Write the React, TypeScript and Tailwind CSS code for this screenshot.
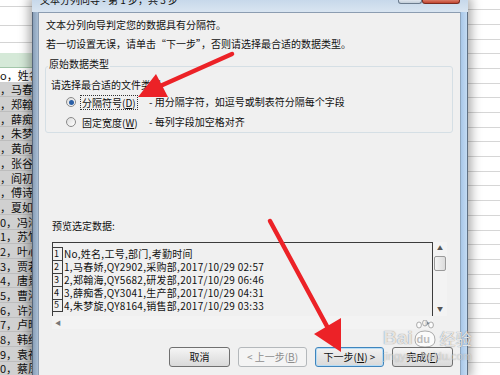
import React from "react";

const cjk = "font-['Noto_Sans_CJK_SC','Noto_Sans',sans-serif]";

function LeftSheet() {
  const rows = [
    "o，姓名，工号",
    "，马春娇",
    "，郑翰海",
    "，薛痴香",
    "，朱梦旋",
    "，黄向晴",
    "，张谷菱",
    "，阎初阳",
    "，傅诗蕾",
    "，夏如柏",
    "0，冯沛凝",
    "1，苏竹",
    "2，叶心",
    "3，贾若",
    "4，唐景",
    "5，曹沁",
    "6，许洁",
    "7，卢晴",
    "8，韩纾",
    "9，袁祯",
    "0，蔡凤",
  ];
  return (
    <div className={`w-[32px] shrink-0 flex flex-col overflow-hidden bg-white ${cjk}`}>
      <div className="h-[6px] shrink-0" />
      <div className="h-[19px] shrink-0 border-t border-[#d4d4d4]" />
      <div className="h-[17px] shrink-0 border-t border-[#d4d4d4]" />
      <div className="h-[11px] shrink-0 border-t border-[#d4d4d4]" />
      <div className="h-[15px] shrink-0 bg-[#d5e9d8] border-b border-[#a3c7aa]" />
      {rows.map((r, i) => (
        <div
          key={i}
          className={`h-[14.7px] shrink-0 whitespace-nowrap text-[11px] leading-[13px] text-[#111] flex items-end border-b ${
            i === 0 ? "bg-white border-[#cfcfcf]" : "bg-[#d0d0d0] border-[#bdbdbd]"
          }`}
        >
          {r}
        </div>
      ))}
    </div>
  );
}

function RightSheet() {
  const rows = Array.from({ length: 25 });
  return (
    <div className="w-[32px] shrink-0 flex flex-col overflow-hidden bg-white">
      <div className="h-[9.2px] shrink-0" />
      {rows.map((_, i) => (
        <div key={i} className="h-[14.7px] shrink-0 border-t border-[#d6d6d6]" />
      ))}
    </div>
  );
}

function Radio({ checked }: { checked: boolean }) {
  return (
    <span className="w-[10px] h-[10px] rounded-full border border-[#8a8a8a] bg-linear-to-br from-[#dcdcdc] to-[#ffffff] flex items-center justify-center shrink-0">
      {checked && <span className="w-[5px] h-[5px] rounded-full bg-[#2a5fa6]" />}
    </span>
  );
}

function Btn({
  w,
  kind,
  children,
}: {
  w: string;
  kind: "normal" | "focus" | "disabled";
  children: React.ReactNode;
}) {
  const base = `${w} h-[20px] rounded-[3px] border flex items-center justify-center text-[10px] leading-[12px] shrink-0`;
  const k =
    kind === "disabled"
      ? "border-[#b4b8bb] bg-[#f4f4f4] text-[#8d8d8d]"
      : kind === "focus"
      ? "border-[#3f85bd] bg-linear-to-b from-[#f2f2f2] to-[#d9d9d9] text-[#111] shadow-[inset_0_0_0_1px_#b7dcf5]"
      : "border-[#707070] bg-linear-to-b from-[#f5f5f5] to-[#d9d9d9] text-[#111]";
  return <div className={`${base} ${k}`}>{children}</div>;
}

function Preview() {
  const lines = [
    "No,姓名,工号,部门,考勤时间",
    "1,马春娇,QY2902,采购部,2017/10/29 02:57",
    "2,郑翰海,QY5682,研发部,2017/10/29 06:46",
    "3,薛痴香,QY3041,生产部,2017/10/29 04:31",
    "4,朱梦旋,QY8164,销售部,2017/10/29 03:33",
  ];
  return (
    <div className="ml-[13px] mt-[9px] w-[395px] flex flex-col">
      <div className="flex h-[74px]">
        <div className="w-[381px] h-[74px] border-t border-l border-r border-[#3c3c3c] bg-[#f0f0f0] pt-[4px] overflow-hidden">
          {lines.map((l, i) => (
            <div key={i} className="flex h-[13px]">
              <div
                className={`w-[10px] shrink-0 border-r border-t border-[#3c3c3c] text-[9px] leading-[12px] pl-[1px] text-[#111] flex items-end ${
                  i === 4 ? "border-b" : ""
                }`}
              >
                {i + 1}
              </div>
              <div className="pl-[1px] text-[10px] leading-[13px] tracking-[0.28px] whitespace-nowrap text-[#111]">{l}</div>
            </div>
          ))}
        </div>
        <div className="w-[14px] h-[74px] bg-[#f3f3f3] flex flex-col items-center">
          <div className="h-[12px] text-[6px] leading-[12px] text-[#555]">▲</div>
          <div className="w-[12px] h-[15px] mt-[2px] rounded-[2px] border border-[#9a9a9a] bg-linear-to-r from-[#f4f4f4] to-[#dcdcdc]" />
          <div className="flex-1" />
          <div className="h-[14px] text-[6px] leading-[14px] text-[#555]">▼</div>
        </div>
      </div>
      <div className="w-[381px] h-[13px] bg-[#f3f3f3] flex items-center justify-between px-[3px] text-[6px] text-[#777]">
        <span>◀</span>
        <span>▶</span>
      </div>
    </div>
  );
}

function Client() {
  return (
    <div className={`flex-1 bg-[#f0f0f0] border-t border-l border-[#8c9db1] flex flex-col text-[#111] ${cjk}`}>
      <div className="ml-[7px] mt-[5px] text-[10px] leading-[14px] whitespace-nowrap">
        文本分列向导判定您的数据具有分隔符。
      </div>
      <div className="ml-[7px] mt-[5px] text-[10px] leading-[14px] whitespace-nowrap">
        若一切设置无误，请单击“下一步”，否则请选择最合适的数据类型。
      </div>
      <div className="ml-[6px] mr-[7px] mt-[15px] h-[67px] border border-[#d5dfe5] rounded-[3px] flex flex-col">
        <div className="-mt-[10px] ml-[2px] px-[1px] w-fit bg-[#f0f0f0] text-[10px] leading-[14px]">原始数据类型</div>
        <div className="ml-[5px] mt-[7px] text-[10px] leading-[14px]">请选择最合适的文件类型:</div>
        <div className="flex items-center h-[20px] mt-[0.5px]">
          <div className="ml-[20px]">
            <Radio checked />
          </div>
          <div className="w-[69px] ml-[4px] flex">
            <span className="border border-dotted border-[#333] px-[1px] text-[10px] leading-[13px]">
              分隔符号(<span className="underline">D</span>)
            </span>
          </div>
          <span className="text-[10px] leading-[14px] whitespace-nowrap">- 用分隔字符，如逗号或制表符分隔每个字段</span>
        </div>
        <div className="flex items-center h-[20px]">
          <div className="ml-[20px]">
            <Radio checked={false} />
          </div>
          <div className="w-[69px] ml-[4px] flex">
            <span className="border border-transparent px-[1px] text-[10px] leading-[13px]">
              固定宽度(<span className="underline">W</span>)
            </span>
          </div>
          <span className="text-[10px] leading-[14px] whitespace-nowrap">- 每列字段加空格对齐</span>
        </div>
      </div>
      <div className="ml-[13px] mt-[86px] text-[10px] leading-[14px]">预览选定数据:</div>
      <Preview />
      <div className="mt-[18px] pr-[7px] flex justify-end gap-[8px]">
        <Btn w="w-[61px]" kind="normal">取消</Btn>
        <Btn w="w-[69px]" kind="disabled">
          &lt; 上一步(<span className="underline">B</span>)
        </Btn>
        <Btn w="w-[69px]" kind="focus">
          下一步(<span className="underline">N</span>) &gt;
        </Btn>
        <Btn w="w-[61px]" kind="normal">
          完成(<span className="underline">F</span>)
        </Btn>
      </div>
    </div>
  );
}

function Dialog() {
  return (
    <div className="w-[436px] shrink-0 h-[375px] flex flex-col shadow-[0_0_10px_3px_rgba(0,0,0,0.35)] relative z-10">
      <div className={`h-[12px] shrink-0 bg-linear-to-b from-[#c7d8ea] to-[#d9e5f1] flex items-start overflow-hidden ${cjk}`}>
        <div className="ml-[8px] -mt-[6px] text-[10px] leading-[12px] whitespace-nowrap text-[#111]">
          文本分列向导 - 第 1 步，共 3 步
        </div>
        <div className="flex-1" />
        <div className="w-[24px] h-[4px] bg-linear-to-b from-[#dfe6ee] to-[#c3ced9] border border-t-0 border-[#6b7c8e] rounded-b-[3px]" />
        <div className="w-[38px] h-[4px] bg-linear-to-b from-[#d97a66] to-[#c1442f] border border-t-0 border-[#7b2c20] rounded-b-[3px] mr-[8px]" />
      </div>
      <div className="flex flex-1 min-h-0">
        <div className="w-[6px] shrink-0 bg-linear-to-r from-[#8aa0b9] to-[#a9bed4] border-l border-[#56667a]" />
        <Client />
        <div className="w-[8px] shrink-0 bg-linear-to-r from-[#a8c7e8] to-[#c3dbf3] border-l border-[#8fa6be] border-r border-r-[#5e6f82]" />
      </div>
    </div>
  );
}

function Arrows() {
  return (
    <svg className="absolute inset-0 pointer-events-none z-20" width="500" height="375" viewBox="0 0 500 375">
      <line x1="232" y1="54" x2="158" y2="87" stroke="#ec2227" strokeWidth="4.5" strokeLinecap="round" />
      <polygon points="138,97 156,74 168,97" fill="#ec2227" />
      <line x1="270" y1="221" x2="329" y2="330" stroke="#ec2227" strokeWidth="4.5" strokeLinecap="round" />
      <polygon points="341,352 314,334 341,318" fill="#ec2227" />
    </svg>
  );
}

function Watermark() {
  return (
    <div className="absolute left-[383px] top-[320px] z-20 pointer-events-none flex flex-col">
      <div className="flex items-end h-[28px]">
        <span className="font-['Liberation_Sans',sans-serif] font-bold text-[19px] leading-[20px] text-white/80 [text-shadow:0_0_1px_rgba(90,90,90,0.9)]">
          Bai
        </span>
        <div className="relative w-[24px] h-[28px]">
          <svg className="absolute left-0 top-0" width="24" height="28" viewBox="0 0 24 28">
            <g fill="rgba(255,255,255,0.75)" stroke="rgba(110,110,110,0.8)" strokeWidth="0.7">
              <ellipse cx="6" cy="5" rx="2.4" ry="3" />
              <ellipse cx="12" cy="3" rx="2.4" ry="3" />
              <ellipse cx="18" cy="5" rx="2.4" ry="3" />
              <path d="M2 20 Q2 11 12 11 Q22 11 22 20 Q22 27 12 27 Q2 27 2 20 Z" />
            </g>
          </svg>
          <span className="absolute left-[4px] top-[13px] font-['Liberation_Sans',sans-serif] font-bold text-[11px] leading-[12px] text-[#bbbbbb]">
            du
          </span>
        </div>
        <span className={`${cjk} text-[16px] leading-[20px] ml-[3px] text-white/80 [text-shadow:0_0_1px_rgba(90,90,90,0.9)]`}>
          经验
        </span>
      </div>
      <span className="font-['Liberation_Sans',sans-serif] text-[11px] leading-[12px] mt-[2px] text-white/50 [text-shadow:0_0_1px_rgba(90,90,90,0.5)]">
        jingyan.baidu.com
      </span>
    </div>
  );
}

export default function App() {
  return (
    <div className="w-[500px] h-[375px] relative overflow-hidden bg-white flex">
      <LeftSheet />
      <Dialog />
      <RightSheet />
      <Arrows />
      <Watermark />
    </div>
  );
}
